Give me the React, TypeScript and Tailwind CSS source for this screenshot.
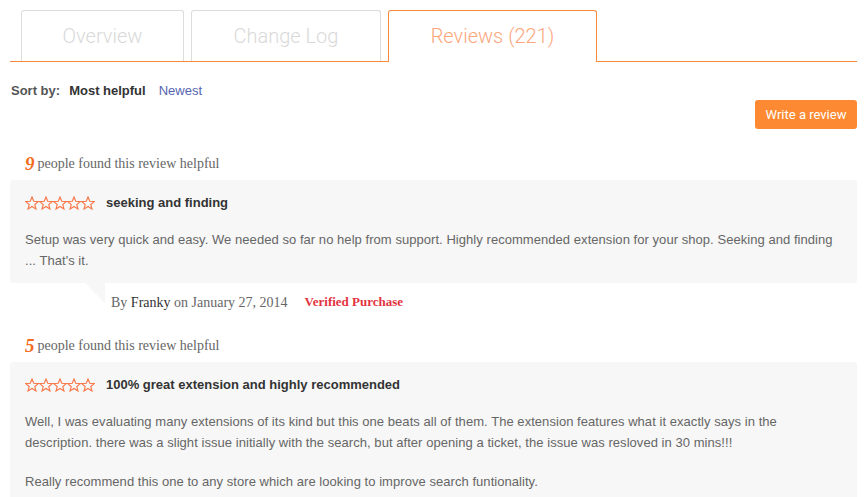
import React from "react";

const serif = "font-['Georgia','Liberation_Serif',serif]";
const sans = "font-['Liberation_Sans',Arial,sans-serif]";

function Stars() {
  return (
    <div className="flex items-center">
      {[0, 1, 2, 3, 4].map((i) => (
        <svg key={i} width="14" height="14" viewBox="0 0 24 24" fill="none" stroke="#f8784a" strokeWidth="2" strokeLinejoin="miter">
          <path d="M12 1.8l3 7.3 7.9.5-6.1 5.1 2 7.6L12 18.1l-6.8 4.2 2-7.6-6.1-5.1 7.9-.5z" />
        </svg>
      ))}
    </div>
  );
}

type Review = {
  helpful: number;
  title: string;
  body: string[];
  author?: string;
  date?: string;
};

const reviews: Review[] = [
  {
    helpful: 9,
    title: "seeking and finding",
    body: [
      "Setup was very quick and easy. We needed so far no help from support. Highly recommended extension for your shop. Seeking and finding ... That's it.",
    ],
    author: "Franky",
    date: "January 27, 2014",
  },
  {
    helpful: 5,
    title: "100% great extension and highly recommended",
    body: [
      "Well, I was evaluating many extensions of its kind but this one beats all of them. The extension features what it exactly says in the description. there was a slight issue initially with the search, but after opening a ticket, the issue was resloved in 30 mins!!!",
      "Really recommend this one to any store which are looking to improve search funtionality.",
    ],
  },
];

function ReviewItem({ r }: { r: Review }) {
  return (
    <div>
      <div className={`${serif} flex items-end h-5 leading-5 pl-[15px] mb-[6px] text-[14px] text-[#666]`}>
        <span className="text-[19px] leading-5 font-bold italic text-[#f26b1d] mr-[3px]">{r.helpful}</span>
        <span>people found this review helpful</span>
      </div>
      <div className="bg-[#f7f7f7] rounded-[3px] pt-[15px] px-[15px] pb-[12px] relative">
        <div className="flex items-center h-4">
          <Stars />
          <span className={`${sans} ml-[11px] text-[13px] font-bold text-[#333]`}>{r.title}</span>
        </div>
        <div className={`${sans} mt-[18px] text-[13px] leading-[21px] tracking-[0.05px] text-[#666] flex flex-col gap-[18px]`}>
          {r.body.map((p, i) => (
            <p key={i}>{p}</p>
          ))}
        </div>
        {r.author && (
          <div className="absolute left-[75px] top-full w-0 h-0 border-t-[20px] border-t-[#f7f7f7] border-l-[20px] border-l-transparent" />
        )}
      </div>
      {r.author && (
        <div className={`${serif} flex items-center h-5 mt-[9px] mb-6 pl-[101px] text-[14px] text-[#666]`}>
          <span>
            By <span className="text-[#333]">{r.author}</span> on {r.date}
          </span>
          <span className="ml-[17px] text-[13px] font-bold text-[#e2343f]">Verified Purchase</span>
        </div>
      )}
    </div>
  );
}

export default function App() {
  const tabs = [
    { label: "Overview", w: "w-[163px]" },
    { label: "Change Log", w: "w-[190px]" },
  ];
  return (
    <div className="w-[867px] h-[497px] overflow-hidden bg-white pl-[10px] pr-[10px] pt-[10px]">
      {/* tabs */}
      <div className="flex items-end gap-[7px] pl-[11px] border-b border-[#f68a3c] h-[52px] font-['Roboto',sans-serif] font-light text-[20px]">
        {tabs.map((t) => (
          <div
            key={t.label}
            className={`${t.w} h-[51px] border border-b-0 border-[#dcdcdc] rounded-t-[3px] flex items-center justify-center text-[#d9d9d9]`}
          >
            {t.label}
          </div>
        ))}
        <div className="w-[209px] h-[52px] -mb-px border border-b-0 border-[#f68a3c] rounded-t-[3px] bg-white flex items-center justify-center text-[#fba67c] pb-px">
          Reviews (221)
        </div>
      </div>

      {/* sort */}
      <div className={`${sans} mt-[19px] h-5 flex items-center pl-px text-[13px] font-bold`}>
        <span className="text-[#555]">Sort by:</span>
        <span className="ml-[9px] text-[#333]">Most helpful</span>
        <span className="ml-[13px] font-normal text-[#5565b0]">Newest</span>
      </div>

      <div className="flex justify-end -mt-px">
        <button className="h-[29px] w-[102px] rounded-[3px] bg-[#fd8a33] text-white text-[13px] font-['Roboto',sans-serif]">
          Write a review
        </button>
      </div>

      <div className="mt-[25px]">
        {reviews.map((r, i) => (
          <ReviewItem key={i} r={r} />
        ))}
      </div>
    </div>
  );
}
